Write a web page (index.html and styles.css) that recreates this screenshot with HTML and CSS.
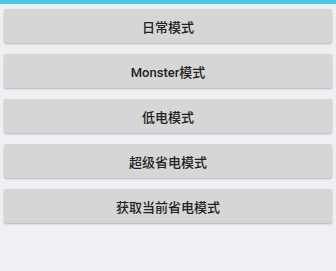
FILE: index.html
```html
<!DOCTYPE html>
<html lang="zh">
<head>
    <meta charset="UTF-8">
    <meta name="viewport" content="width=device-width, initial-scale=1.0">
    <title>省电模式</title>
    <link rel="stylesheet" href="styles.css">
</head>
<body>
    <div class="status-bar"></div>
    <div class="container">
        <button class="button">日常模式</button>
        <button class="button">Monster模式</button>
        <button class="button">低电模式</button>
        <button class="button">超级省电模式</button>
        <button class="button">获取当前省电模式</button>
    </div>
</body>
</html>
```

FILE: styles.css
```css
body {
    font-family: Roboto, "Noto Sans CJK SC", sans-serif;
    margin: 0;
    padding: 0;
    background-color: #f0eff4;
    min-height: 100vh;
}
.status-bar {
    height: 4px;
    background-color: #4fc3e0;
}
.container {
    display: flex;
    flex-direction: column;
    gap: 11px;
    padding: 5px 4px 0 4px;
}
.button {
    height: 34px;
    border: none;
    border-radius: 2px;
    background-color: #d6d6d6;
    color: #222;
    font-family: inherit;
    font-size: 13px;
    font-weight: 500;
    box-shadow: 0 1px 2px rgba(0, 0, 0, 0.25);
    padding: 0;
}
```
